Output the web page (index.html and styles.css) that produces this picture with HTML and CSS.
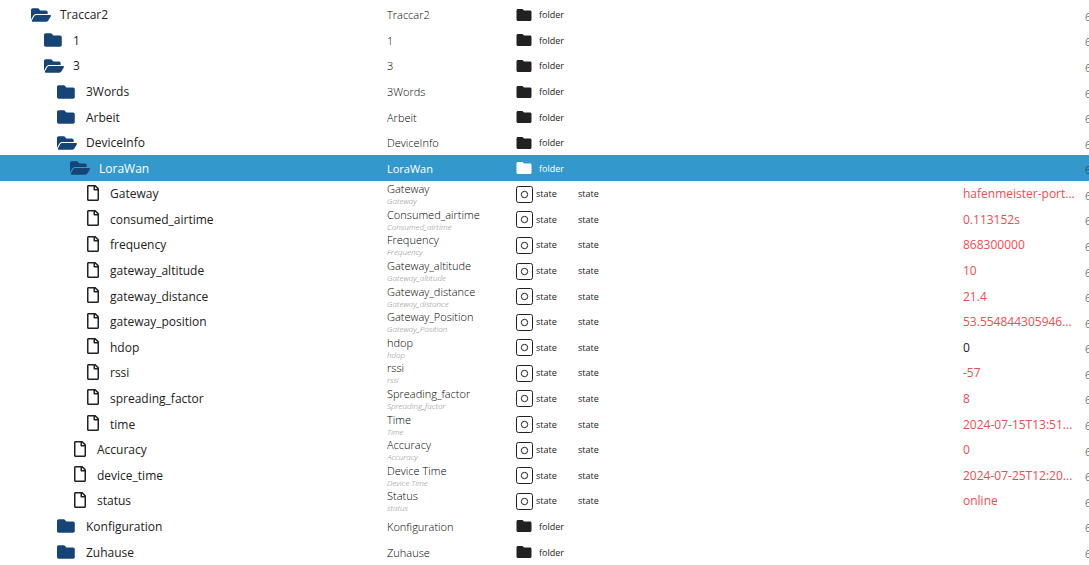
FILE: index.html
```html
<!DOCTYPE html>
<html lang="en">
  <head>
    <meta charset="UTF-8">
    <meta name="viewport" content="width=device-width, initial-scale=1.0">
    <title>Objects</title>
    <link rel="stylesheet" href="styles.css">
  </head>
  <body>
    <svg class="icon-defs" aria-hidden="true">
      <symbol id="closed" viewBox="0 0 576 512">
        <path d="M464 128H272l-64-64H48C21.500 64 0 85.500 0 112v288c0 26.500 21.500 48 48 48h416c26.500 0 48-21.500 48-48V176c0-26.500-21.500-48-48-48z"/>
      </symbol>
      <symbol id="open" viewBox="0 0 576 512">
        <path d="M572.700 292.100L500.300 416.200A64 64 0 0 1 445 448H45c-18.500 0-30-20-20.700-36l72.400-124.200A64 64 0 0 1 152 256h400c18.500 0 30 20 20.700 36.100zM152 224h328v-48c0-26.500-21.500-48-48-48H272l-64-64H48C21.500 64 0 85.500 0 112v278l69-118.400C86.200 242.200 118 224 152 224z"/>
      </symbol>
      <symbol id="file" viewBox="0 0 384 512">
        <path d="M369.900 97.900L286 14C277 5 264.800 0 252 0H48C21.500 0 0 21.500 0 48v416c0 26.500 21.500 48 48 48h288c26.500 0 48-21.500 48-48V132c0-12.800-5.100-25-14.100-34.100zM332 128h-76V52l76 76zM48 464V48h160v104c0 13.300 10.700 24 24 24h104v288H48z"/>
      </symbol>
      <symbol id="folder" viewBox="0 0 24 24">
        <path d="M10 4H4c-1.100 0-2 .9-2 2v12c0 1.100.9 2 2 2h16c1.100 0 2-.9 2-2V8c0-1.100-.9-2-2-2h-8l-2-2z"/>
      </symbol>
      <symbol id="state" viewBox="0 0 18 18">
        <rect x="1.500" y="1.500" width="16" height="16" rx="2" fill="none" stroke="currentColor"/>
        <circle cx="9.500" cy="9.500" r="3.200" fill="none" stroke="currentColor"/>
      </symbol>
    </svg>

    <table class="tree">
      <colgroup>
        <col class="col-id">
        <col class="col-name">
        <col class="col-type">
        <col class="col-role">
        <col class="col-value">
        <col class="col-rights">
      </colgroup>
      <tbody id="rows"></tbody>
    </table>

    <script src="script.js"></script>
  </body>
</html>
```
FILE: styles.css
```css
body {
  margin: 0;
  padding-top: 2px;
  box-sizing: border-box;
  overflow: hidden;
  font-family: "Open Sans", "Noto Sans", sans-serif;
  font-size: 12px;
  color: #212121;
  background: #fff;
}

svg {
  fill: currentColor;
  flex-shrink: 0;
}

.icon-defs {
  position: absolute;
  width: 0;
  height: 0;
}

.tree {
  width: 100%;
  height: calc(100vh - 2px);
  table-layout: fixed;
  border-collapse: collapse;
}

.tree tr {
  height: calc(100% / 22);
}

.tree td {
  padding: 0;
  line-height: 15px;
  white-space: nowrap;
  overflow: hidden;
}

.col-id {
  width: 387px;
}

.col-name {
  width: 128px;
}

.col-type {
  width: 63px;
}

.col-value {
  width: 122px;
}

.col-rights {
  width: 4px;
}

.item {
  display: flex;
  align-items: center;
  padding-left: 31px;
}

.item svg {
  width: 20px;
  height: 18px;
  margin-right: 9px;
  color: #164477;
}

.item .file {
  width: 12px;
  height: 16px;
  margin: 0 11px 2px 4px;
  color: #212121;
}

.level-1 {
  padding-left: 44px;
}

.level-2 {
  padding-left: 57px;
}

.level-3 {
  padding-left: 70px;
}

.level-4 {
  padding-left: 83px;
}

.name {
  font-size: 11px;
  font-weight: 300;
  color: #000;
}

.tree .sub {
  font-size: 8px;
  font-style: italic;
  line-height: 10px;
  color: #888;
}

.type {
  display: flex;
  align-items: center;
  gap: 6px;
}

.type svg {
  width: 18px;
  height: 18px;
}

.type .state {
  margin-right: -3px;
}

.type,
.role {
  font-size: 9px;
}

.value {
  color: #f04c50;
}

.value.confirmed {
  color: #212121;
}

.tree .rights {
  padding-top: 3px;
  font-size: 11px;
  font-weight: 300;
  color: #333;
}

.selected,
.selected .name {
  background: #3399cc;
  color: #fff;
  font-weight: 500;
}
```
FILE: script.js
```js
// level, icon, id, name, sub name, value
const objects = [
  [0, 'open', 'Traccar2', 'Traccar2'],
  [1, 'closed', '1', '1'],
  [1, 'open', '3', '3'],
  [2, 'closed', '3Words', '3Words'],
  [2, 'closed', 'Arbeit', 'Arbeit'],
  [2, 'open', 'DeviceInfo', 'DeviceInfo'],
  [3, 'open', 'LoraWan', 'LoraWan'],
  [4, 'file', 'Gateway', 'Gateway', 'Gateway', 'hafenmeister-port...'],
  [4, 'file', 'consumed_airtime', 'Consumed_airtime', 'Consumed_airtime', '0.113152s'],
  [4, 'file', 'frequency', 'Frequency', 'Frequency', '868300000'],
  [4, 'file', 'gateway_altitude', 'Gateway_altitude', 'Gateway_altitude', '10'],
  [4, 'file', 'gateway_distance', 'Gateway_distance', 'Gateway_distance', '21.4'],
  [4, 'file', 'gateway_position', 'Gateway_Position', 'Gateway_Position', '53.554844305946...'],
  [4, 'file', 'hdop', 'hdop', 'hdop', '0'],
  [4, 'file', 'rssi', 'rssi', 'rssi', '-57'],
  [4, 'file', 'spreading_factor', 'Spreading_factor', 'Spreading_factor', '8'],
  [4, 'file', 'time', 'Time', 'Time', '2024-07-15T13:51...'],
  [3, 'file', 'Accuracy', 'Accuracy', 'Accuracy', '0'],
  [3, 'file', 'device_time', 'Device Time', 'Device Time', '2024-07-25T12:20...'],
  [3, 'file', 'status', 'Status', 'status', 'online'],
  [2, 'closed', 'Konfiguration', 'Konfiguration'],
  [2, 'closed', 'Zuhause', 'Zuhause']
];

function icon(name) {
  return `<svg class="${name}" aria-hidden="true"><use href="#${name}"/></svg>`;
}

document.getElementById('rows').innerHTML = objects.map(([level, image, id, name, sub, value]) => {
  const isState = image === 'file';
  const type = isState ? 'state' : 'folder';
  return `<tr class="${id === 'LoraWan' ? 'selected' : ''}">
    <td><div class="item level-${level}">${icon(image)}<span>${id}</span></div></td>
    <td class="name">${name}${sub ? `<div class="sub">${sub}</div>` : ''}</td>
    <td><div class="type">${icon(type)}<span>${type}</span></div></td>
    <td class="role">${isState ? 'state' : ''}</td>
    <td class="value ${id === 'hdop' ? 'confirmed' : ''}">${value || ''}</td>
    <td class="rights">6</td>
  </tr>`;
}).join('');
```
